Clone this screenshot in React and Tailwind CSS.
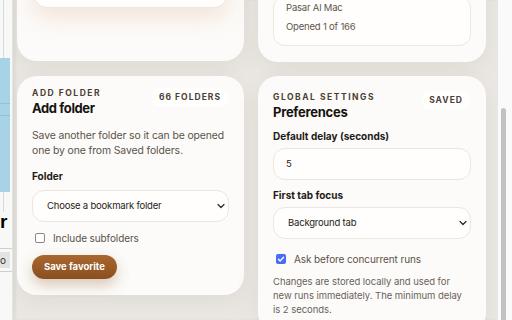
import React from "react";

function Chevron() {
  return (
    <svg width="8" height="6" viewBox="0 0 8 6" fill="none">
      <path d="M1 1.5l3 3 3-3" stroke="#2a2622" strokeWidth="1.2" strokeLinecap="round" strokeLinejoin="round" />
    </svg>
  );
}

function Eyebrow({ children }) {
  return (
    <div className="text-[8.5px] leading-[12px] font-bold tracking-[0.18em] uppercase text-[#4b4036]">
      {children}
    </div>
  );
}

function Badge({ children }) {
  return (
    <div className="rounded-full bg-[#fefefd] px-[8px] h-[19px] flex items-center text-[8.5px] font-bold tracking-[0.12em] uppercase text-[#4b4036]">
      {children}
    </div>
  );
}

function Field({ children, className = "" }) {
  return (
    <div
      className={`h-[32px] rounded-[12px] border border-[#ebe6df] bg-[#fffefd] flex items-center justify-between text-[9.5px] tracking-[-0.02em] text-[#1f1b17] ${className}`}
    >
      {children}
    </div>
  );
}

function LeftStrip() {
  return (
    <div className="w-[13px] shrink-0 bg-[#f8f8f8] flex flex-col overflow-hidden border-r border-[#e4e4e4]">
      <div className="h-[58px] ml-[3px] border-l border-[#dadada]" />
      <div className="h-[134px] w-[10px] bg-[#a8d3e7] flex flex-col">
        <div className="h-[45px]" />
        <div className="h-px bg-[#8fc1d9]" />
        <div className="h-[11px]" />
        <div className="h-px bg-[#8fc1d9]" />
      </div>
      <div className="h-[20px] ml-[3px] border-l border-[#dadada]" />
      <div className="h-[20px] text-[19px] leading-[20px] font-bold text-black font-['Liberation_Sans',sans-serif]">
        r
      </div>
      <div className="h-[16px]" />
      <div className="h-px bg-[#cfcfcf]" />
      <div className="h-[3px]" />
      <div className="h-[16px] w-[10px] bg-[#e3e3e3] text-[10px] leading-[16px] text-[#333]">o</div>
      <div className="h-[3px]" />
      <div className="h-px bg-[#cfcfcf]" />
    </div>
  );
}

function Scrollbar() {
  return (
    <div className="w-[15px] shrink-0 bg-[#fafafa] border-l border-[#e6e6e6] flex justify-center">
      <div className="mt-[108px] ml-[-3px] w-[5px] h-[240px] rounded-full bg-[#c2c2c2]" />
    </div>
  );
}

export default function App() {
  return (
    <div className="w-[512px] h-[320px] flex overflow-hidden bg-white font-['Inter',sans-serif]">
      <LeftStrip />

      <main className="flex-1 overflow-hidden bg-[#ebe8e3] pl-[4px] shadow-[inset_3px_0_3px_rgba(0,0,0,0.05)]">
        <div className="-mt-[40px] grid grid-cols-[227px_228px] gap-x-[14px] gap-y-[14px] items-start">
          {/* top-left card, scrolled mostly out of view */}
          <div className="h-[101px] rounded-[20px] bg-[#fcfbf9] shadow-[0_8px_24px_rgba(90,70,50,0.08)] px-[16px] flex flex-col justify-end pb-[53px]">
            <div className="h-[40px] rounded-[14px] border border-[#ece7e1] bg-[#fffefd] shadow-[0_10px_22px_rgba(215,150,110,0.22)]" />
          </div>

          {/* top-right card */}
          <div className="h-[102px] rounded-[20px] bg-[#fcfbf9] shadow-[0_8px_24px_rgba(90,70,50,0.08)] px-[15px] pb-[16px] flex flex-col justify-end">
            <div className="rounded-[12px] border border-[#ece7e1] bg-[#fffefd] px-[12px] pt-[4px] pb-[11px] text-[9.5px] tracking-[-0.02em] text-[#5e554c]">
              <div className="leading-[14px]">Pasar Al Mac</div>
              <div className="leading-[14px] mt-[5px]">Opened 1 of 166</div>
            </div>
          </div>

          {/* Add folder */}
          <section className="rounded-[20px] bg-[#fcfbf9] shadow-[0_8px_24px_rgba(90,70,50,0.08)] px-[15px] pt-[11px] pb-[16px]">
            <div className="flex items-start justify-between">
              <div>
                <Eyebrow>Add folder</Eyebrow>
                <h2 className="text-[13px] leading-[18px] font-bold tracking-[-0.03em] text-[#161310]">Add folder</h2>
              </div>
              <div className="mt-[1px]">
                <Badge>66 folders</Badge>
              </div>
            </div>
            <p className="mt-[11px] text-[10.4px] leading-[15px] tracking-[-0.01em] text-[#5b5148]">
              Save another folder so it can be opened one by one from Saved folders.
            </p>
            <div className="mt-[11px] text-[10px] leading-[15px] font-bold text-[#1e1a16]">Folder</div>
            <Field className="mt-[6px] pl-[14px] pr-[3px]">
              <span>Choose a bookmark folder</span>
              <Chevron />
            </Field>
            <label className="mt-[8px] flex items-center gap-[8px] h-[16px] text-[10px] tracking-[-0.01em] text-[#5b5148]">
              <span className="ml-[3px] w-[10px] h-[10px] rounded-[2px] border border-[#8c8680] bg-white" />
              <span>Include subfolders</span>
            </label>
            <button className="mt-[9px] h-[24px] px-[12px] rounded-full bg-gradient-to-b from-[#a9672f] to-[#8a4f1f] text-white text-[9.5px] font-bold shadow-[0_6px_14px_rgba(140,80,30,0.3)]">
              Save favorite
            </button>
          </section>

          {/* Preferences */}
          <section className="rounded-[20px] bg-[#fcfbf9] shadow-[0_8px_24px_rgba(90,70,50,0.08)] px-[15px] pt-[15px] pb-[16px]">
            <div className="flex items-start justify-between">
              <div>
                <Eyebrow>Global settings</Eyebrow>
                <h2 className="text-[13px] leading-[18px] font-bold tracking-[-0.02em] text-[#161310]">Preferences</h2>
              </div>
              <div className="mt-[0px]">
                <Badge>Saved</Badge>
              </div>
            </div>
            <div className="mt-[8px] text-[10px] leading-[15px] font-bold text-[#1e1a16]">Default delay (seconds)</div>
            <Field className="mt-[4px] pl-[12px]">
              <span>5</span>
            </Field>
            <div className="mt-[8px] text-[10px] leading-[15px] font-bold text-[#1e1a16]">First tab focus</div>
            <Field className="mt-[4px] pl-[14px] pr-[3px]">
              <span>Background tab</span>
              <Chevron />
            </Field>
            <label className="mt-[12px] flex items-center gap-[8px] h-[16px] text-[10px] tracking-[-0.01em] text-[#5b5148]">
              <span className="ml-[3px] w-[10px] h-[10px] rounded-[2px] bg-[#4a6cf5] flex items-center justify-center">
                <svg width="8" height="8" viewBox="0 0 8 8" fill="none">
                  <path d="M1.5 4.2l1.7 1.7 3.3-3.6" stroke="white" strokeWidth="1.4" strokeLinecap="round" strokeLinejoin="round" />
                </svg>
              </span>
              <span>Ask before concurrent runs</span>
            </label>
            <p className="mt-[8px] text-[9.5px] leading-[14px] tracking-[-0.005em] text-[#6b625a]">
              Changes are stored locally and used for new runs immediately. The minimum delay is 2 seconds.
            </p>
          </section>
        </div>
      </main>

      <Scrollbar />
    </div>
  );
}
